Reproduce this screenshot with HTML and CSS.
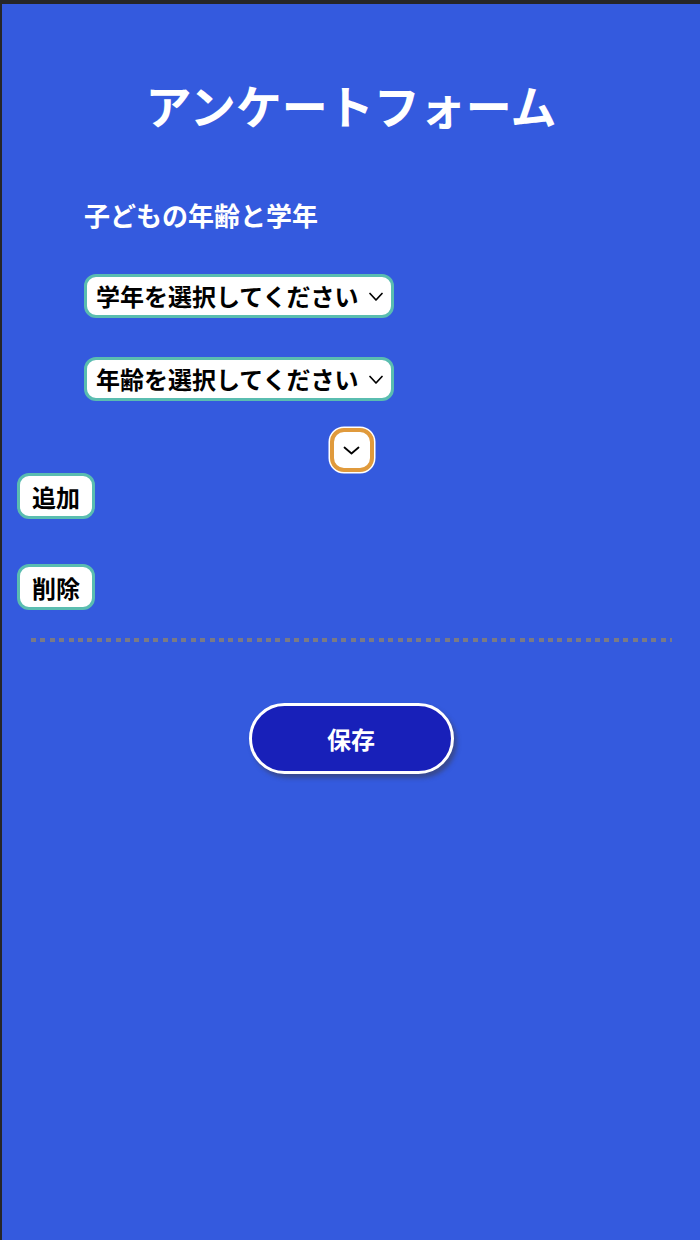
FILE: index.html
```html
<!DOCTYPE html>
<html lang="ja">
<head>
<meta charset="utf-8">
<title>アンケートフォーム</title>
<link rel="stylesheet" href="styles.css">
</head>
<body>
<div class="frame">
  <h1 class="title">アンケートフォーム</h1>
  <section class="group">
    <div class="label">子どもの年齢と学年</div>
    <div class="select first">
      <span class="select-text">学年を選択してください</span>
      <svg class="chev" width="14" height="10" viewBox="0 0 14 10"><path d="M1 1.5 L7 8 L13 1.5" fill="none" stroke="#000" stroke-width="1.7" stroke-linecap="round" stroke-linejoin="round"/></svg>
    </div>
    <div class="select second">
      <span class="select-text">年齢を選択してください</span>
      <svg class="chev" width="14" height="10" viewBox="0 0 14 10"><path d="M1 1.5 L7 8 L13 1.5" fill="none" stroke="#000" stroke-width="1.7" stroke-linecap="round" stroke-linejoin="round"/></svg>
    </div>
  </section>
  <div class="toggle-row">
    <button class="toggle"><svg width="17" height="9" viewBox="0 0 17 9"><path d="M1.5 1.5 L8.5 7.5 L15.5 1.5" fill="none" stroke="#000" stroke-width="1.8" stroke-linecap="round" stroke-linejoin="round"/></svg></button>
  </div>
  <div class="actions">
    <button class="small-btn add">追加</button>
    <button class="small-btn del">削除</button>
  </div>
  <div class="divider"></div>
  <div class="save-row">
    <button class="save">保存</button>
  </div>
</div>
</body>
</html>
```

FILE: styles.css
```css
html, body {
  margin: 0;
  padding: 0;
  height: 100%;
}
body {
  background: #262628;
  font-family: "Noto Sans CJK JP", "Noto Sans", sans-serif;
}
.frame {
  min-height: 1236px;
  margin-top: 4px;
  margin-left: 2px;
  background: #345ade;
  display: flex;
  flex-direction: column;
}
.title {
  margin: 77px 0 0;
  font-size: 46px;
  line-height: 46px;
  font-weight: 700;
  color: #fff;
  text-align: center;
}
.group {
  padding-left: 82px;
  display: flex;
  flex-direction: column;
  align-items: flex-start;
}
.label {
  margin-top: 75px;
  font-size: 26px;
  line-height: 26px;
  font-weight: 700;
  color: #fff;
}
.select {
  box-sizing: border-box;
  height: 44px;
  width: 310px;
  border: 3px solid #5abdb0;
  border-radius: 12px;
  background: #fff;
  display: flex;
  align-items: center;
  padding: 0 0 0 9px;
}
.select.first { margin-top: 46px; }
.select.second { margin-top: 39px; }
.select-text {
  font-size: 24px;
  line-height: 24px;
  font-weight: 700;
  color: #000;
  white-space: nowrap;
}
.chev {
  margin-left: 10px;
  margin-top: 1px;
}
.toggle-row {
  display: flex;
  justify-content: center;
  margin-top: 27px;
}
.toggle {
  box-sizing: border-box;
  width: 44px;
  height: 44px;
  border: 4px solid #e09a3c;
  border-radius: 14px;
  background: #fff;
  box-shadow: 0 0 0 1.5px #fff;
  padding: 0;
  display: flex;
  align-items: center;
  justify-content: center;
  margin-left: 1px;
}
.actions {
  display: flex;
  flex-direction: column;
  align-items: flex-start;
  padding-left: 15px;
  gap: 45px;
  margin-top: 1px;
}
.small-btn {
  box-sizing: border-box;
  height: 46px;
  width: 78px;
  border: 3px solid #5abdb0;
  border-radius: 12px;
  background: #fff;
  font-family: inherit;
  font-size: 24px;
  font-weight: 700;
  color: #000;
  padding: 0;
  display: flex;
  align-items: center;
  justify-content: center;
}
.divider {
  margin: 28px 28px 0 29px;
  height: 4px;
  background: repeating-linear-gradient(to right, #7a7a86 0 5px, transparent 5px 9.4px);
}
.save-row {
  display: flex;
  justify-content: center;
  margin-top: 61px;
}
.save {
  box-sizing: border-box;
  width: 205px;
  height: 71px;
  border: 3px solid #fff;
  border-radius: 36px;
  background: #1820b9;
  color: #fff;
  font-family: inherit;
  font-size: 24px;
  font-weight: 700;
  box-shadow: 3px 4px 4px rgba(60, 60, 80, 0.55);
  padding: 0;
}
```
